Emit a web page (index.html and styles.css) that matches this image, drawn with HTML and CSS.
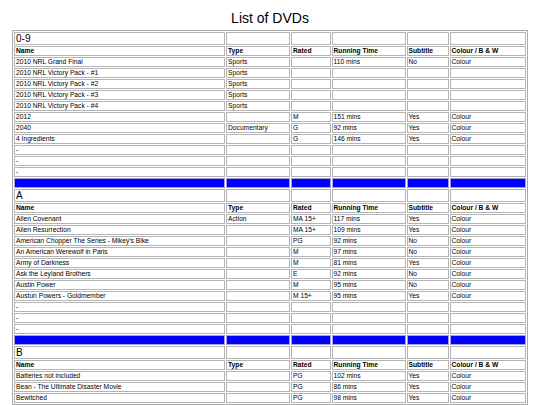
FILE: index.html
```html
<!DOCTYPE html>
<html>
<head>
<meta charset="utf-8">
<title>List of DVDs</title>
<link rel="stylesheet" href="styles.css">
</head>
<body>
<h1 class="title">List of DVDs</h1>
<table class="dvds">
  <colgroup>
    <col class="c-name"><col class="c-type"><col class="c-rated"><col class="c-time"><col class="c-sub"><col class="c-colour">
  </colgroup>
  <tbody>
    <tr class="section"><td>0-9</td><td></td><td></td><td></td><td></td><td></td></tr>
    <tr class="head"><th>Name</th><th>Type</th><th>Rated</th><th>Running Time</th><th>Subtitle</th><th>Colour / B &amp; W</th></tr>
    <tr><td>2010 NRL Grand Final</td><td>Sports</td><td></td><td>110 mins</td><td>No</td><td>Colour</td></tr>
    <tr><td>2010 NRL Victory Pack - #1</td><td>Sports</td><td></td><td></td><td></td><td></td></tr>
    <tr><td>2010 NRL Victory Pack - #2</td><td>Sports</td><td></td><td></td><td></td><td></td></tr>
    <tr><td>2010 NRL Victory Pack - #3</td><td>Sports</td><td></td><td></td><td></td><td></td></tr>
    <tr><td>2010 NRL Victory Pack - #4</td><td>Sports</td><td></td><td></td><td></td><td></td></tr>
    <tr><td>2012</td><td></td><td>M</td><td>151 mins</td><td>Yes</td><td>Colour</td></tr>
    <tr><td>2040</td><td>Documentary</td><td>G</td><td>92 mins</td><td>Yes</td><td>Colour</td></tr>
    <tr><td>4 Ingredients</td><td></td><td>G</td><td>146 mins</td><td>Yes</td><td>Colour</td></tr>
    <tr><td>-</td><td></td><td></td><td></td><td></td><td></td></tr>
    <tr><td>-</td><td></td><td></td><td></td><td></td><td></td></tr>
    <tr><td>-</td><td></td><td></td><td></td><td></td><td></td></tr>
    <tr class="divider"><td></td><td></td><td></td><td></td><td></td><td></td></tr>

    <tr class="section"><td>A</td><td></td><td></td><td></td><td></td><td></td></tr>
    <tr class="head"><th>Name</th><th>Type</th><th>Rated</th><th>Running Time</th><th>Subtitle</th><th>Colour / B &amp; W</th></tr>
    <tr><td>Alien Covenant</td><td>Action</td><td>MA 15+</td><td>117 mins</td><td>Yes</td><td>Colour</td></tr>
    <tr><td>Alien Resurrection</td><td></td><td>MA 15+</td><td>109 mins</td><td>Yes</td><td>Colour</td></tr>
    <tr><td>American Chopper The Series - Mikey's Bike</td><td></td><td>PG</td><td>92 mins</td><td>No</td><td>Colour</td></tr>
    <tr><td>An American Werewolf in Paris</td><td></td><td>M</td><td>97 mins</td><td>No</td><td>Colour</td></tr>
    <tr><td>Army of Darkness</td><td></td><td>M</td><td>81 mins</td><td>Yes</td><td>Colour</td></tr>
    <tr><td>Ask the Leyland Brothers</td><td></td><td>E</td><td>92 mins</td><td>No</td><td>Colour</td></tr>
    <tr><td>Austin Power</td><td></td><td>M</td><td>95 mins</td><td>No</td><td>Colour</td></tr>
    <tr><td>Austun Powers - Goldmember</td><td></td><td>M 15+</td><td>95 mins</td><td>Yes</td><td>Colour</td></tr>
    <tr><td>-</td><td></td><td></td><td></td><td></td><td></td></tr>
    <tr><td>-</td><td></td><td></td><td></td><td></td><td></td></tr>
    <tr><td>-</td><td></td><td></td><td></td><td></td><td></td></tr>
    <tr class="divider"><td></td><td></td><td></td><td></td><td></td><td></td></tr>

    <tr class="section"><td>B</td><td></td><td></td><td></td><td></td><td></td></tr>
    <tr class="head"><th>Name</th><th>Type</th><th>Rated</th><th>Running Time</th><th>Subtitle</th><th>Colour / B &amp; W</th></tr>
    <tr><td>Batteries not included</td><td></td><td>PG</td><td>102 mins</td><td>Yes</td><td>Colour</td></tr>
    <tr><td>Bean - The Ultimate Disaster Movie</td><td></td><td>PG</td><td>86 mins</td><td>Yes</td><td>Colour</td></tr>
    <tr><td>Bewitched</td><td></td><td>PG</td><td>98 mins</td><td>Yes</td><td>Colour</td></tr>
  </tbody>
</table>
</body>
</html>
```

FILE: styles.css
```css
html, body {
  margin: 0;
  padding: 0;
  background: #ffffff;
}

body {
  font-family: "Liberation Sans", Arial, sans-serif;
  color: #000000;
}

.title {
  margin: 0;
  padding-top: 10px;
  height: 20px;
  font-size: 14px;
  font-weight: normal;
  line-height: 16px;
  text-align: center;
  color: #000000;
}

.dvds {
  margin: 0 auto;
  width: 516px;
  table-layout: fixed;
  border-collapse: separate;
  border-spacing: 1px;
  border: 1px solid #a8a8a8;
}

.c-name { width: 211px; }
.c-type { width: 64px; }
.c-rated { width: 39.5px; }
.c-time { width: 74px; }
.c-sub { width: 42px; }
.c-colour { width: 76.5px; }

.dvds td,
.dvds th {
  border: 1px solid #b4b4b4;
  padding: 0 1px;
  height: 8px;
  font-size: 6.7px;
  line-height: 8px;
  text-align: left;
  vertical-align: middle;
  white-space: nowrap;
  overflow: hidden;
}

.dvds th {
  font-weight: bold;
  color: #000000;
}

.section td {
  height: 11px;
  font-size: 10px;
  line-height: 11px;
  color: #000000;
}

.divider td {
  background: #0000ff;
  border-color: #a0a0e0;
}
```
